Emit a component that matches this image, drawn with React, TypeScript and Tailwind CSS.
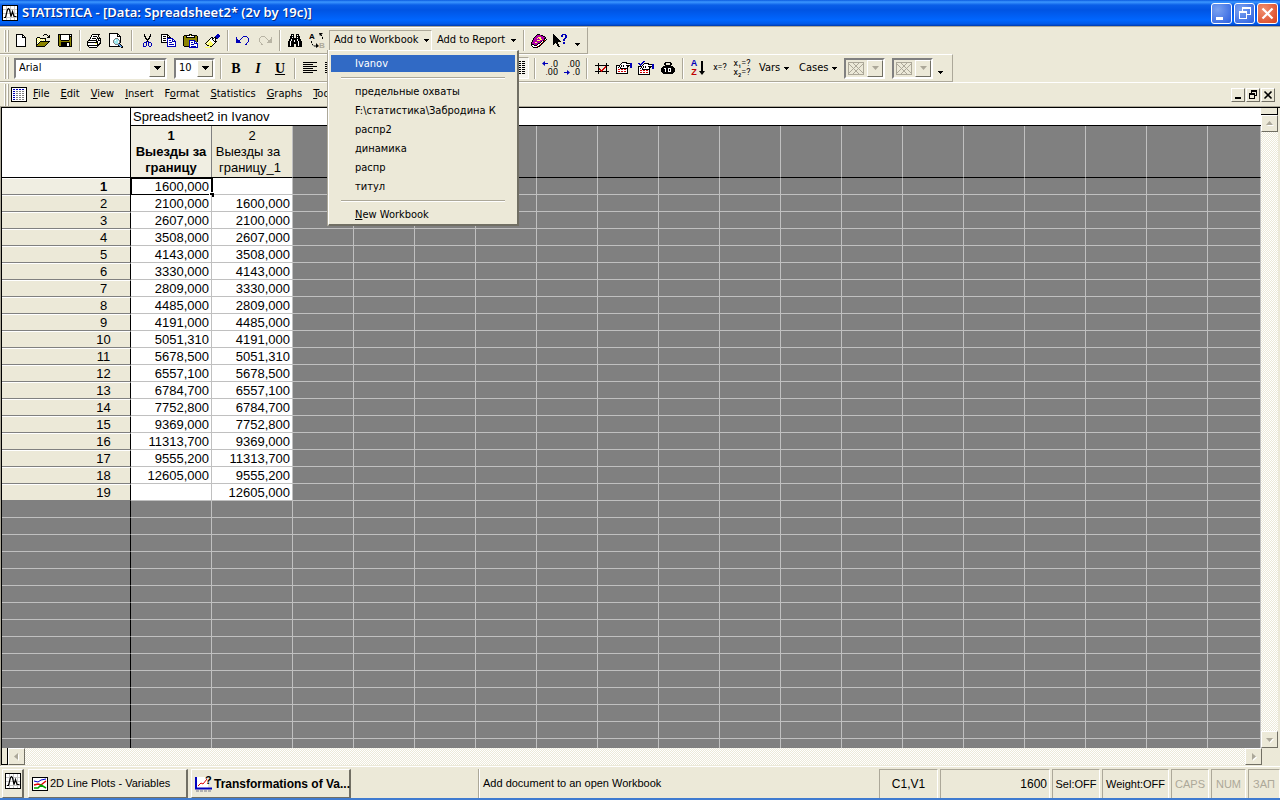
import type { ReactNode } from "react";

const INKS: Record<string, string> = {
  k: "#000000",
  w: "#ffffff",
  y: "#ffff66",
  Y: "#8c8400",
  o: "#c8b850",
  b: "#0000b8",
  B: "#5a9ae0",
  g: "#808080",
  l: "#b8b4a4",
  r: "#d00000",
  p: "#b000a8",
  c: "#a0e8f0",
};

/* Small bitmap glyphs, one character per pixel. */
const NEW_DOC = [
  "kkkkkkk...",
  "kwwwwwkk..",
  "kwwwwwkwk.",
  "kwwwwwkkkk",
  "kwwwwwwwwk",
  "kwwwwwwwwk",
  "kwwwwwwwwk",
  "kwwwwwwwwk",
  "kwwwwwwwwk",
  "kwwwwwwwwk",
  "kwwwwwwwwk",
  "kwwwwwwwwk",
  "kkkkkkkkkk",
];

const OPEN = [
  ".........kkk....",
  "........k...k.k.",
  ".............kk.",
  "..kkk.......kkk.",
  ".kywykkkkkk.....",
  ".kwywywywyk.....",
  ".kywywywywk.....",
  ".kwywkkkkkkkkkk.",
  ".kywkYYYYYYYYk..",
  ".kwkYYYYYYYYk...",
  ".kkYYYYYYYYk....",
  ".kYYYYYYYYk.....",
  ".kkkkkkkkk......",
];

const SAVE = [
  "kkkkkkkkkkkkkk",
  "kYkwwwwwwwwkwk",
  "kYkwwwwwwwwkkk",
  "kYkwwwwwwwwkYk",
  "kYkwwwwwwwwkYk",
  "kYkwwwwwwwwkYk",
  "kYYkkkkkkkkYYk",
  "kYYYYYYYYYYYYk",
  "kYYkkkkkkkkkYk",
  "kYYkkkkkkwwkYk",
  "kYYkkkkkkwwkYk",
  "kYYkkkkkkwwkYk",
  ".kkkkkkkkkkkkk",
];

const PRINT = [
  ".....kkkkkkkk...",
  "....kwwwwwwk....",
  "....kwkkkkwk....",
  "...kwwwwwwk.k...",
  "...kwkkkkwkkkk..",
  "..kwwwwwwkwkwk..",
  ".kkkkkkkkkwkkk..",
  "klwwwwwwwkkwwk..",
  "kkkkkkkkkkkwlk..",
  "kwwwwwwwyykwkk..",
  "kwwwwwwwwwkkk...",
  "kkkkkkkkkkkk....",
  ".kwwwwwwwwk.....",
  "..kkkkkkkk......",
];

const PREVIEW = [
  "kkkkkkkkk.......",
  "kwwwwwwwkk......",
  "kwwwwwwwkwk.....",
  "kwwwwwwwkkkk....",
  "kwwwwwwwwwwk....",
  "kwwwwwgggwwk....",
  "kwwwwgcccgwk....",
  "kwwwgcwcccgk....",
  "kwwwgccccwgk....",
  "kwwwgccccwgk....",
  "kwwwwgcccgk.....",
  "kwwwwwgggBBk....",
  "kwwwwwwwwkBBk...",
  "kkkkkkkkkkkBBk..",
  "............kk..",
];

const CUT = [
  "..k.....k.",
  "..k.....k.",
  "..kk...kk.",
  "...k...k..",
  "...kk.kk..",
  "....kkk...",
  ".....k....",
  "....bkb...",
  "..bbb.bbb.",
  ".b..b.b..b",
  ".b..b.b..b",
  ".b..b.b..b",
  ".bbb...bb.",
];

const COPY = [
  "kkkkkkk.........",
  "kwwwwwkk........",
  "kwkkkwkwk.......",
  "kwwwwwkkkk......",
  "kwkkkwbbbbbb....",
  "kwwwwwbwwwwbb...",
  "kwkkkwbwbbwbwb..",
  "kwwwwwbwwwwbbbb.",
  "kkkkkkbwbbbwwwb.",
  "......bwwwwwwwb.",
  "......bwbbbbbwb.",
  "......bwwwwwwwb.",
  "......bbbbbbbbb.",
];

const PASTE = [
  "......kkk.......",
  ".kkkkkkykkkkkk..",
  "kYYkwwwwwwwkYYk.",
  "kYYkkkkkkkkkYYk.",
  "kYYYYYYYYYYYYYk.",
  "kYYYYYYYYYYYYYk.",
  "kYYYYYbbbbbbYYk.",
  "kYYYYYbwwwwbbYk.",
  "kYYYYYbwbbwbwb..",
  "kYYYYYbwwwwbbbb.",
  "kYYYYYbwbbbwwwb.",
  "kYYYYYbwwwwwwwb.",
  ".kkkkkbwbbbbbwb.",
  "......bbbbbbbbb.",
];

const PAINTER = [
  "............bb..",
  "...........bbbb.",
  "..........bbbbb.",
  "......kk.kkbbb..",
  ".....kwkkwkkb...",
  "....kwwkwwk.....",
  "...kywwwkwk.....",
  "..kywywwwkkk....",
  ".kywyyywwwk.....",
  "kywyyyyywk......",
  ".kyyyyyyk.......",
  "..kkyyyk........",
  ".....kk.........",
  "yyyyyy..........",
];

const UNDO = [
  ".......bbbb...",
  "b.....b....b..",
  "b....b......b.",
  "bb..b.......b.",
  "bbbb........b.",
  "bbbb........b.",
  "bbbbb......b..",
  "..........b...",
  ".........bb...",
];

const BINOCULARS = [
  "...kkk..kkk....",
  "...kwk..kwk....",
  "..kkkk..kkkk...",
  "..kkwk..kwkk...",
  "..kkkkkkkkkk...",
  ".kkwkkkkkwkkk..",
  ".kkwkkwkkwkkk..",
  "kkwkkkwkkkwkkk.",
  "kkwkkkkkkkwkkk.",
  "kkwkkkkkkkwkkk.",
  "kkwkkk..kkwkkk.",
  "kkwkkk..kkwkkk.",
  "kkkkkk..kkkkkk.",
];

const BOOK = [
  "......kkk.......",
  ".....kppppkk....",
  "....kpppppppkk..",
  "...kpppyyyppppk.",
  "..kpppypyypppkk.",
  "..kppppppyyppkwk",
  ".kppppyyypppkrk.",
  ".kppppppppkwkk..",
  "kpppyypppkwrk...",
  "kppppppkkwkk....",
  "kkkpppkwwrk.....",
  "kwwkkkwwkk......",
  ".kwwwwrkk.......",
  "..kkkkk.........",
];

const POINTER = [
  "k........bbbb....",
  "kk......bb..bb...",
  "kkk.....bb..bb...",
  "kkkk........bb...",
  "kkkkk......bb....",
  "kkkkkk....bb.....",
  "kkkkkkk...bb.....",
  "kkkkkkkk.........",
  "kkkkk.....bb.....",
  "kk.kk.....bb.....",
  "k...kk...........",
  "....kk...........",
  ".....kk..........",
];

const CELLS = [
  "...k.......k..",
  "...k.......k..",
  "kkkkkkkkkkkkkk",
  "...k......rk..",
  "...k.....rrk..",
  "...kr...rr.k..",
  "...krr.rr..k..",
  "...k.rrr...k..",
  "kkkkkkrkkkkkkk",
  "...k.......k..",
  "...k.......k..",
];

const SPECS = [
  "......kkkkk.....",
  ".....kwwwwkkkkbb",
  "....kwwwwwwwwwbb",
  "kkkkwkwkwwkkkkbb",
  "kwwkwkwkwwwkk.bb",
  "kwkwkwwwwwwk..bb",
  "kwwwkkkkkkkk....",
  "kwrrwrrwrrwk....",
  "kwwwwwwwwwwk....",
  "kwrrwrrwrrwk....",
  "kwwwwwwwwwwk....",
  "kkkkkkkkkkkk....",
];

const ALL_SPECS = [
  ".....bb.........",
  "....bb..........",
  "bb.bb.kkkkk.....",
  ".bbb.kwwwwkkkkbb",
  "..b.kwwwwwwwwwbb",
  "kkkkwkwkwwkkkkbb",
  "kwwkwkwkwwwkk.bb",
  "kwkwkwwwwwwk..bb",
  "kwwwkkkkkkkk....",
  "kwrrwrrwrrwk....",
  "kwwwwwwwwwwk....",
  "kwrrwrrwrrwk....",
  "kwwwwwwwwwwk....",
  "kkkkkkkkkkkk....",
];

const WEIGHT = [
  "....kkkkkk....",
  "...kk....kk...",
  "...kk....kk...",
  "....kkkkkk....",
  "..kkkkkkkkkk..",
  ".kkkkkkkkkkkk.",
  "kkkwwkkwwwkkkk",
  "kkkkwkkwkwkkkk",
  "kkkkwkkwkwkkkk",
  "kkkkwkkwwwkkkk",
  ".kkkkkkkkkkkk.",
  "..kkkkkkkkkk..",
];

const SHEET = [
  "kkkkkkkkkkkkkkkk",
  "kwwwwwwwwwwwwwwk",
  "kwbbwbbwbbwbbwwk",
  "kwwwwwwwwwwwwwwk",
  "kwbbwggwggwggwwk",
  "kwwwwwwwwwwwwwwk",
  "kwbbwggwggwggwwk",
  "kwwwwwwwwwwwwwwk",
  "kwbbwggwggwggwwk",
  "kwwwwwwwwwwwwwwk",
  "kwbbwggwggwggwwk",
  "kwwwwwwwwwwwwwwk",
  "kwbbwggwggwggwwk",
  "kwwwwwwwwwwwwwwk",
  "kkkkkkkkkkkkkkkk",
];

function Pix({ rows, ink }: { rows: string[]; ink?: string }) {
  const width = rows[0].length;
  return (
    <svg width={width} height={rows.length} className="shrink-0" shapeRendering="crispEdges" aria-hidden="true">
      {rows.flatMap((row, y) =>
        [...row].map((ch, x) =>
          ch === "." ? null : (
            <rect key={`${x}-${y}`} x={x} y={y} width="1" height="1" fill={ink ?? INKS[ch]} />
          ),
        ),
      )}
    </svg>
  );
}

function AppIcon() {
  return (
    <svg width="16" height="16" aria-hidden="true">
      <rect width="16" height="16" fill="#000" />
      <rect x="1" y="1" width="14" height="14" fill="#fff" />
      <path d="M4.5 1v14M8.5 1v14M12.5 1v14M1 4.5h14M1 8.5h14M1 12.5h14" stroke="#c8c8c8" />
      <path d="M2 12.5h1.5l2-8 1-1 1 1 1.5 7 1.5-5 1.5 5h2.5" fill="none" stroke="#000" strokeWidth="1.2" />
    </svg>
  );
}

function Arrow({ className = "text-black" }: { className?: string }) {
  return (
    <svg width="5" height="3" className={className} shapeRendering="crispEdges" aria-hidden="true">
      <path d="M0 0h5v1h-1v1h-1v1h-1v-1h-1v-1h-1z" fill="currentColor" />
    </svg>
  );
}

function ToolButton({ label, children }: { label: string; children: ReactNode }) {
  return (
    <button type="button" aria-label={label} className="flex h-[22px] w-[22px] shrink-0 items-center justify-center">
      {children}
    </button>
  );
}

function Separator() {
  return (
    <div className="flex w-2 shrink-0 justify-center">
      <div className="h-[21px] w-[2px] border-l border-[#aca899] bg-white" />
    </div>
  );
}

function Grip() {
  return (
    <div className="ml-1 flex shrink-0 gap-[1px]">
      <div className="h-[22px] w-[2px] border-r border-[#aca899] bg-white" />
      <div className="h-[22px] w-[2px] border-r border-[#aca899] bg-white" />
    </div>
  );
}

const RECENT = ["предельные охваты", "F:\\статистика\\Забродина К", "распр2", "динамика", "распр", "титул"];

function MenuRule() {
  return <div role="separator" className="mx-[10px] mt-1 mb-[3px] h-[2px] border-t border-[#aca899] bg-white" />;
}

function WorkbookMenu() {
  return (
    <div
      role="menu"
      className="absolute -left-[1px] top-[20px] z-20 w-[191px] border border-r-2 border-b-2 border-white border-r-[#716f64] border-b-[#716f64] bg-[#ece9d8] px-[2px] pt-[3px] shadow-[-1px_0_0_#aca899]"
    >
      <button
        type="button"
        role="menuitem"
        className="block h-[19px] w-full border-y border-[#ece9d8] bg-[#316ac5] pl-[24px] text-left leading-[17px] text-white"
      >
        Ivanov
      </button>
      <MenuRule />
      {RECENT.map((name) => (
        <button
          key={name}
          type="button"
          role="menuitem"
          className="block h-[19px] w-full pl-[24px] text-left leading-[19px] whitespace-nowrap"
        >
          {name}
        </button>
      ))}
      <MenuRule />
      <button type="button" role="menuitem" className="block h-[19px] w-full pl-[24px] text-left leading-[19px]">
        <u>N</u>ew Workbook
      </button>
    </div>
  );
}

function AlignIcon() {
  return (
    <svg width="14" height="12" shapeRendering="crispEdges" aria-hidden="true">
      <path d="M0 .5h14M0 2.5h10M0 4.5h14M0 6.5h10M0 8.5h14M0 10.5h10" stroke="#000" />
    </svg>
  );
}

function StandardBar() {
  return (
    <div className="flex h-[27px] w-[588px] items-center border-t border-r border-b border-t-white border-r-[#aca899] border-b-[#aca899]">
      <Grip />
      <span className="w-[1px]" />
      <ToolButton label="New"><Pix rows={NEW_DOC} /></ToolButton>
      <ToolButton label="Open"><Pix rows={OPEN} /></ToolButton>
      <ToolButton label="Save"><Pix rows={SAVE} /></ToolButton>
      <Separator />
      <ToolButton label="Print"><Pix rows={PRINT} /></ToolButton>
      <ToolButton label="Print preview"><Pix rows={PREVIEW} /></ToolButton>
      <Separator />
      <ToolButton label="Cut"><Pix rows={CUT} /></ToolButton>
      <ToolButton label="Copy"><Pix rows={COPY} /></ToolButton>
      <ToolButton label="Paste"><Pix rows={PASTE} /></ToolButton>
      <ToolButton label="Format painter"><Pix rows={PAINTER} /></ToolButton>
      <Separator />
      <ToolButton label="Undo"><Pix rows={UNDO} /></ToolButton>
      <ToolButton label="Redo">
        <span className="-scale-x-100"><Pix rows={UNDO} ink="#b8b4a4" /></span>
      </ToolButton>
      <Separator />
      <ToolButton label="Find"><Pix rows={BINOCULARS} /></ToolButton>
      <ToolButton label="Replace">
        <svg width="17" height="16" aria-hidden="true" fontFamily="Liberation Sans" fontSize="8" fontWeight="bold">
          <text x="0" y="6">A</text>
          <text x="10" y="15" fill="#aca899">B</text>
          <path d="M2.5 8v2l2 3h3M13.5 6v-2.5l-2-2" fill="none" stroke="#000" strokeDasharray="2 1" />
          <path d="M7 10l3 3-3 2zM10 0h4l-3 3z" />
        </svg>
      </ToolButton>
      <div className="relative ml-[1px]">
        <button
          type="button"
          aria-haspopup="menu"
          aria-expanded="true"
          className="flex h-[21px] w-[103px] items-center justify-between border border-[#aca899] border-r-white pr-[2px] pl-1 whitespace-nowrap"
        >
          Add to Workbook
          <Arrow />
        </button>
        <WorkbookMenu />
      </div>
      <button type="button" className="ml-[5px] flex h-[22px] w-[79px] items-center justify-between whitespace-nowrap">
        Add to Report
        <Arrow />
      </button>
      <span className="w-1" />
      <Separator />
      <ToolButton label="Help"><Pix rows={BOOK} /></ToolButton>
      <ToolButton label="What's this?"><Pix rows={POINTER} /></ToolButton>
      <button type="button" aria-label="More buttons" className="mt-2 ml-[3px]">
        <Arrow />
      </button>
    </div>
  );
}

function Combo({ label, value, className }: { label: string; value: string; className: string }) {
  return (
    <div className={`relative h-[21px] shrink-0 border-2 border-t-[#808080] border-l-[#808080] border-r-white border-b-white bg-white ${className}`}>
      <select aria-label={label} className="h-full w-full appearance-none pl-[3px] leading-[16px] outline-none">
        <option>{value}</option>
      </select>
      <span className="pointer-events-none absolute top-0 right-0 flex h-[17px] w-4 items-center justify-center border border-t-white border-l-white border-r-[#716f64] border-b-[#716f64] bg-[#ece9d8]">
        <svg width="7" height="4" shapeRendering="crispEdges" aria-hidden="true">
          <path d="M0 0h7v1h-1v1h-1v1h-1v1h-1v-1h-1v-1h-1v-1h-1z" />
        </svg>
      </span>
    </div>
  );
}

function PatternCombo({ label }: { label: string }) {
  return (
    <button
      type="button"
      aria-label={label}
      disabled
      className="flex h-[21px] w-[41px] shrink-0 items-center justify-between border-2 border-t-[#808080] border-l-[#808080] border-r-white border-b-white pl-[2px]"
    >
      <svg width="16" height="13" aria-hidden="true">
        <rect x=".5" y=".5" width="15" height="12" fill="none" stroke="#aca899" />
        <path d="M1 2l10 10M5 1l10 10M11 1L1 11M15 2L5 12" stroke="#aca899" />
      </svg>
      <span className="flex h-[17px] w-4 items-center justify-center border border-t-white border-l-white border-r-[#716f64] border-b-[#716f64]">
        <svg width="7" height="4" aria-hidden="true"><path d="M0 0h7l-3.5 4z" fill="#aca899" /></svg>
      </span>
    </button>
  );
}

function Decimals({ top, bottom, right }: { top: string; bottom: string; right?: boolean }) {
  return (
    <svg width="17" height="16" aria-hidden="true" fontFamily="Roboto" fontSize="9">
      <text x="16" y="7" textAnchor="end">{top}</text>
      <text x="16" y="15" textAnchor="end">{bottom}</text>
      {right ? (
        <path d="M0 12h3v-2l3 2.5-3 2.500v-2h-3z" fill="#0000b8" />
      ) : (
        <path d="M6 3h-3v-2l-3 2.5 3 2.500v-2h3z" fill="#0000b8" />
      )}
    </svg>
  );
}

function FormatBar() {
  return (
    <div className="flex h-[28px] w-[953px] items-center border-t border-r border-b border-t-white border-r-[#aca899] border-b-[#aca899]">
      <Grip />
      <Combo label="Font" value="Arial" className="ml-[5px] w-[153px]" />
      <Combo label="Font size" value="10" className="ml-[7px] w-[41px]" />
      <span className="w-[2px]" />
      <Separator />
      <button type="button" className="h-[22px] w-[22px] font-['Liberation_Serif'] text-[14px] font-black">B</button>
      <button type="button" className="h-[22px] w-[22px] font-['Liberation_Serif'] text-[14px] font-bold italic">I</button>
      <button type="button" className="h-[22px] w-[22px] font-['Liberation_Serif'] text-[14px] font-bold underline">U</button>
      <Separator />
      <ToolButton label="Align left"><AlignIcon /></ToolButton>
      <ToolButton label="Align center"><AlignIcon /></ToolButton>
      <button
        type="button"
        aria-label="Gridlines"
        aria-pressed="true"
        className="ml-[164px] flex h-[22px] w-[22px] items-center justify-center border border-t-[#aca899] border-l-[#aca899] border-r-white border-b-white bg-[#f6f5ee]"
      >
        <svg width="16" height="15" aria-hidden="true">
          <path d="M0 .5h15M0 2.5h15M0 4.5h15M0 6.5h15M0 8.5h15M0 10.5h15M0 12.5h15" stroke="#000" strokeDasharray="3 1" />
        </svg>
      </button>
      <span className="w-[2px]" />
      <Separator />
      <ToolButton label="Increase decimals"><Decimals top=".0" bottom=".00" /></ToolButton>
      <ToolButton label="Decrease decimals"><Decimals top=".00" bottom=".0" right /></ToolButton>
      <Separator />
      <ToolButton label="Cases"><Pix rows={CELLS} /></ToolButton>
      <ToolButton label="Variable specs"><Pix rows={SPECS} /></ToolButton>
      <ToolButton label="All variable specs"><Pix rows={ALL_SPECS} /></ToolButton>
      <ToolButton label="Case weights"><Pix rows={WEIGHT} /></ToolButton>
      <Separator />
      <button type="button" aria-label="Sort" className="flex h-[22px] w-[22px] shrink-0 items-center justify-center gap-[2px]">
        <span className="flex flex-col font-['Liberation_Sans'] text-[9px] leading-[9px] font-bold">
          <span className="text-[#0000b8]">A</span>
          <span className="text-[#c00000]">Z</span>
        </span>
        <svg width="6" height="16" aria-hidden="true">
          <path d="M2 1h2v10h2l-3 4-3-4h2z" />
        </svg>
      </button>
      <ToolButton label="Recalculate"><span className="font-['Roboto'] text-[9px]">x=?</span></ToolButton>
      <ToolButton label="Batch transformation">
        <span className="font-['Roboto'] text-[9px] leading-[9px] whitespace-nowrap">x₁=?<br />x₂=?</span>
      </ToolButton>
      <button type="button" className="flex h-[22px] w-[41px] items-center gap-1 pl-[6px]">Vars <Arrow /></button>
      <button type="button" className="flex h-[22px] w-[50px] items-center gap-1 pl-[5px]">Cases <Arrow /></button>
      <PatternCombo label="Fill pattern" />
      <span className="w-[7px]" />
      <PatternCombo label="Line pattern" />
      <button type="button" aria-label="More buttons" className="mt-2 ml-[5px]">
        <Arrow />
      </button>
    </div>
  );
}

const MENUS = [
  ["", "F", "ile"],
  ["", "E", "dit"],
  ["", "V", "iew"],
  ["", "I", "nsert"],
  ["F", "o", "rmat"],
  ["", "S", "tatistics"],
  ["", "G", "raphs"],
  ["", "T", "ools"],
];

const RAISED = "border border-t-white border-l-white border-r-[#716f64] border-b-[#716f64] bg-[#ece9d8]";

function MenuBar() {
  return (
    <div className="flex h-[25px] items-center border-t border-b border-t-white border-b-[#aca899]">
      <Grip />
      <span className="ml-[2px] shrink-0"><Pix rows={SHEET} /></span>
      <nav className="flex">
        {MENUS.map(([before, key, after]) => (
          <button key={key + after} type="button" className="pr-[5px] pl-[6px]">
            {before}
            <u>{key}</u>
            {after}
          </button>
        ))}
      </nav>
      <div className="ml-auto flex gap-[1px] pr-[5px]">
        <button type="button" aria-label="Minimize sheet" className={`flex h-[14px] w-[14px] items-center justify-center ${RAISED}`}>
          <svg width="10" height="10"><path d="M2 7h6v2h-6z" /></svg>
        </button>
        <button type="button" aria-label="Restore sheet" className={`flex h-[14px] w-[14px] items-center justify-center ${RAISED}`}>
          <svg width="10" height="10" shapeRendering="crispEdges"><path d="M3 0h6v6h-2v-1h1v-3h-4v1h-1zM1 3h6v6h-6zM2 5v3h4v-3z" fillRule="evenodd" /></svg>
        </button>
        <button type="button" aria-label="Close sheet" className={`flex h-[14px] w-[14px] items-center justify-center ${RAISED}`}>
          <svg width="10" height="10"><path d="M1.5 1.5l7 7M8.5 1.5l-7 7" stroke="#000" strokeWidth="1.6" /></svg>
        </button>
      </div>
    </div>
  );
}

const FIRST = [
  "1600,000", "2100,000", "2607,000", "3508,000", "4143,000", "3330,000", "2809,000",
  "4485,000", "4191,000", "5051,310", "5678,500", "6557,100", "6784,700", "7752,800",
  "9369,000", "11313,700", "9555,200", "12605,000", "",
];
const SECOND = ["", ...FIRST.slice(0, 18)];

const SPARE_COLUMNS = Array.from({ length: 16 }, (_, i) => i);
const SPARE_ROWS = Array.from({ length: 15 }, (_, i) => i);

const VALUE = "border-r border-b border-[#c0c0c0] bg-white pt-[1px] pr-[2px] text-right leading-[15px]";

function SpareCells() {
  return SPARE_COLUMNS.map((column) => <td key={column} className="border-r border-b border-[#c0c0c0]" />);
}

function Sheet() {
  return (
    <div className="min-w-0 flex-1 overflow-hidden bg-[#808080]">
      <table className="w-full table-fixed border-separate border-spacing-0 font-['Liberation_Sans',Arial,sans-serif] text-[13px] leading-[16px]">
        <colgroup>
          <col className="w-[129px]" />
          <col className="w-[81px]" />
          <col className="w-[81px]" />
          {SPARE_COLUMNS.map((column) => (
            <col key={column} className={column === 15 ? "" : "w-[61px]"} />
          ))}
        </colgroup>
        <thead>
          <tr>
            <td rowSpan={2} className="border-r border-b border-black bg-white" />
            <th
              scope="colgroup"
              colSpan={18}
              className="h-[18px] border-b border-black bg-white pl-[2px] text-left font-normal"
            >
              Spreadsheet2 in Ivanov
            </th>
          </tr>
          <tr>
            <th scope="col" className="h-[52px] border-r border-b border-r-[#808080] border-b-black bg-[#f0eee2] pt-[2px] align-top">
              1<br />Выезды за<br />границу
            </th>
            <th scope="col" className="border-r border-b border-r-[#c0c0c0] border-b-black bg-[#ece9d8] pt-[2px] align-top font-normal">
              2<br />
              <span className="block pr-2">Выезды за</span>
              <span className="block pr-1">границу_1</span>
            </th>
            {SPARE_COLUMNS.map((column) => (
              <td key={column} className="border-r border-b border-r-[#c0c0c0] border-b-black" />
            ))}
          </tr>
        </thead>
        <tbody>
          {FIRST.map((value, i) => (
            <tr key={i}>
              <th
                scope="row"
                className={`h-[17px] border-t border-r border-b border-t-white border-r-black border-b-[#808080] pl-[75px] text-center leading-[15px] ${
                  i === 0 ? "bg-[#f0eee2] font-bold" : "bg-[#ece9d8] font-normal"
                }`}
              >
                {i + 1}
              </th>
              <td className={`relative ${VALUE} ${i === 0 ? "outline-2 -outline-offset-1 outline-black" : ""}`}>
                {value}
                {i === 0 && <span className="absolute -right-[3px] -bottom-[3px] h-[5px] w-[5px] border-t border-l border-white bg-black" />}
              </td>
              <td className={VALUE}>{SECOND[i]}</td>
              <SpareCells />
            </tr>
          ))}
          {SPARE_ROWS.map((row) => (
            <tr key={row}>
              <td className="h-[17px] border-r border-b border-r-black border-b-[#c0c0c0]" />
              <td className="border-r border-b border-[#c0c0c0]" />
              <td className="border-r border-b border-[#c0c0c0]" />
              <SpareCells />
            </tr>
          ))}
        </tbody>
      </table>
    </div>
  );
}

const TRACK = "bg-[repeating-conic-gradient(#ffffff_0_25%,#ece9d8_0_50%)] bg-[length:2px_2px]";

function ScrollButton({ label, d }: { label: string; d: string }) {
  return (
    <button type="button" aria-label={label} className={`flex h-[17px] w-[17px] shrink-0 items-center justify-center ${RAISED}`}>
      <svg width="9" height="9" aria-hidden="true">
        <path d={d} fill="#fff" transform="translate(1 1)" />
        <path d={d} fill="#aca899" />
      </svg>
    </button>
  );
}

function VerticalScroll() {
  return (
    <div className={`flex w-[17px] shrink-0 flex-col ${TRACK}`}>
      <div className="h-[7px] shrink-0 border-r border-b border-black bg-[#ece9d8]" />
      <ScrollButton label="Scroll up" d="M1 6h7l-3.5-4z" />
      <div className="flex-1" />
      <ScrollButton label="Scroll down" d="M1 3h7l-3.5 4z" />
    </div>
  );
}

function HorizontalScroll() {
  return (
    <div className="flex h-[17px] shrink-0 bg-[#ece9d8]">
      <div className="w-[7px] shrink-0 border-r border-b border-l border-black bg-[#ece9d8]" />
      <ScrollButton label="Scroll left" d="M6 1v7l-4-3.5z" />
      <div className={`flex-1 ${TRACK}`} />
      <ScrollButton label="Scroll right" d="M3 1v7l4-3.5z" />
      <div className="w-[18px] shrink-0" />
    </div>
  );
}

const PANE = "flex h-[29px] shrink-0 items-center border-t border-l border-r border-t-[#aca899] border-l-[#aca899] border-r-white";

function StatusBar() {
  return (
    <footer className="flex h-[34px] shrink-0 items-end border-t border-b-2 border-t-white border-b-[#3f7bd0] pl-[2px] font-['Liberation_Sans',Arial,sans-serif] text-[12px]">
      <button type="button" aria-label="STATISTICA start menu" className={`flex h-[29px] w-[22px] shrink-0 justify-center border-r-2 pt-[3px] ${RAISED}`}>
        <AppIcon />
      </button>
      <button type="button" className={`ml-1 flex h-[29px] w-[160px] shrink-0 items-center gap-[2px] border-r-2 pl-[3px] text-[11px] whitespace-nowrap ${RAISED}`}>
        <svg width="16" height="14" className="shrink-0" aria-hidden="true">
          <rect x=".5" y=".5" width="15" height="13" fill="#fff" stroke="#000" />
          <path d="M2 4l4 1 3-2 5-1" fill="none" stroke="#0000d0" />
          <path d="M2 8l4-1 3 1 5-4" fill="none" stroke="#e00000" strokeWidth="1.5" />
          <path d="M2 11l4 0 3-3 5 3" fill="none" stroke="#00a000" strokeWidth="1.5" />
        </svg>
        2D Line Plots - Variables
      </button>
      <button type="button" className={`ml-[3px] flex h-[29px] w-[160px] shrink-0 items-center gap-[2px] border-r-2 pl-[3px] text-[12px] font-bold whitespace-nowrap ${RAISED}`}>
        <svg width="17" height="17" className="shrink-0" aria-hidden="true" fontFamily="Liberation Sans" fontSize="11" fontWeight="bold">
          <path d="M1 2h12v11h-12z" fill="#fff" />
          <path d="M1 2v11.5h16" fill="none" stroke="#0000c0" strokeWidth="2" />
          <path d="M3 11l3-3 2 1 4-5" fill="none" stroke="#e00000" />
          <path d="M1 16h15" stroke="#b0b0b0" strokeWidth="2" strokeDasharray="3 1" />
          <text x="10" y="9">?</text>
        </svg>
        <span>Transformations of Va...</span>
      </button>
      <div className="ml-[127px] flex h-[29px] flex-1 items-center border-l border-[#aca899] pl-1 text-[11px] shadow-[inset_1px_0_0_#ffffff] whitespace-nowrap">
        Add document to an open Workbook
      </div>
      <div className={`${PANE} w-[59px] justify-center`}>C1,V1</div>
      <div className={`${PANE} ml-[2px] w-[110px] justify-end pr-[2px]`}>1600</div>
      <div className={`${PANE} ml-[2px] w-[48px] justify-center text-[11px]`}>Sel:OFF</div>
      <div className={`${PANE} ml-[2px] w-[67px] justify-center text-[11px]`}>Weight:OFF</div>
      <div className={`${PANE} ml-[2px] w-[38px] justify-center text-[11px] text-[#aca899]`}>CAPS</div>
      <div className={`${PANE} ml-[2px] w-[35px] justify-center text-[11px] text-[#aca899]`}>NUM</div>
      <div className={`${PANE} ml-[2px] w-[32px] justify-center text-[11px] text-[#aca899]`}>ЗАП</div>
    </footer>
  );
}

const CAPTION = "flex h-[21px] w-[21px] items-center justify-center rounded-[3px] border border-white";

function TitleBar() {
  return (
    <header className="flex h-[27px] shrink-0 items-center border-b border-[#aca899] bg-[linear-gradient(#0a5ae0,#3c97ff_2px,#0a5fe8_5px,#0054e3_10px,#0066ff_20px,#0058e8_24px,#0038a8_26px)] pr-[2px] pl-[2px]">
      <AppIcon />
      <h1 className="ml-1 font-['Noto_Sans',sans-serif] text-[13px] font-semibold text-white [text-shadow:1px_1px_0_#0a2a80]">
        STATISTICA - [Data: Spreadsheet2* (2v by 19c)]
      </h1>
      <div className="ml-auto flex gap-[2px]">
        <button type="button" aria-label="Minimize" className={`${CAPTION} bg-[radial-gradient(circle_at_30%_30%,#7ba2f0,#2a5fe0)]`}>
          <svg width="15" height="15"><path d="M2 11h7v3h-7z" fill="#fff" /></svg>
        </button>
        <button type="button" aria-label="Restore" className={`${CAPTION} bg-[radial-gradient(circle_at_30%_30%,#7ba2f0,#2a5fe0)]`}>
          <svg width="15" height="15" fill="none" stroke="#fff" shapeRendering="crispEdges">
            <path d="M5 4.5v-3h8v7h-3M5 2h8" />
            <path d="M2.5 5.5h7v7h-7zM2 6h8" />
          </svg>
        </button>
        <button type="button" aria-label="Close" className={`${CAPTION} bg-[radial-gradient(circle_at_30%_30%,#f09070,#d8401c)]`}>
          <svg width="15" height="15"><path d="M2.5 2.5l10 10M12.5 2.5l-10 10" stroke="#fff" strokeWidth="2.2" /></svg>
        </button>
      </div>
    </header>
  );
}

export default function App() {
  return (
    <div className="flex h-screen flex-col overflow-hidden bg-[#ece9d8] font-['DejaVu_Sans_Condensed','DejaVu_Sans',sans-serif] text-[11px] text-black">
      <TitleBar />
      <div className="shrink-0">
        <StandardBar />
        <FormatBar />
        <MenuBar />
      </div>
      <main className="flex min-h-0 flex-1 flex-col border-l border-[#aca899]">
        <div className="flex min-h-0 flex-1 border-t border-l border-black">
          <Sheet />
          <VerticalScroll />
          <div className="w-[2px] shrink-0 bg-[#ece9d8]" />
        </div>
        <div className="pb-[1px]">
          <HorizontalScroll />
        </div>
      </main>
      <StatusBar />
    </div>
  );
}
